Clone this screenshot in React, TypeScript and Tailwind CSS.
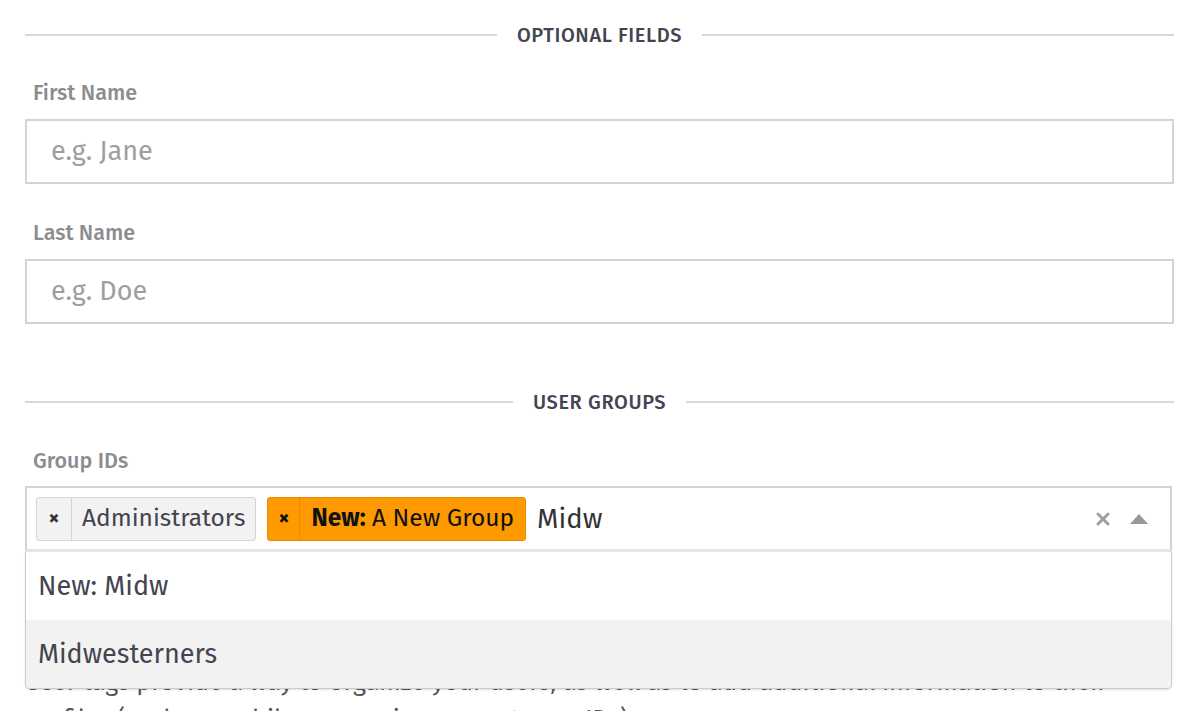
import React from "react";

const font = { fontFamily: '"Fira Sans", "Open Sans", "Noto Sans", sans-serif' };

function Divider({ label }: { label: string }) {
  return (
    <div className="flex items-center h-[24px] gap-[20px]">
      <div className="flex-1 h-[2px] bg-[#d5d9d9]" />
      <div className="text-[20px] leading-[24px] font-medium tracking-[0.6px] text-[#454552]">{label}</div>
      <div className="flex-1 h-[2px] bg-[#d5d9d9]" />
    </div>
  );
}

function Field({ label, placeholder }: { label: string; placeholder: string }) {
  return (
    <div>
      <div className="text-[21.5px] leading-[24px] font-medium text-[#8c8c90] pl-[8px]">{label}</div>
      <div className="mt-[14px] h-[65px] border-2 border-[#d4d4d4] bg-white flex items-center pl-[24px]">
        <span className="text-[27px] text-[#9e9e9e]">{placeholder}</span>
      </div>
    </div>
  );
}

export default function App() {
  return (
    <div className="w-[1200px] h-[711px] overflow-hidden bg-white pl-[25px] pr-[26px] pt-[23px]" style={font}>
      <Divider label="OPTIONAL FIELDS" />
      <div className="mt-[34px]">
        <Field label="First Name" placeholder="e.g. Jane" />
      </div>
      <div className="mt-[37px]">
        <Field label="Last Name" placeholder="e.g. Doe" />
      </div>
      <div className="mt-[66px]">
        <Divider label="USER GROUPS" />
      </div>
      <div className="mt-[35px] text-[21.5px] leading-[24px] font-medium text-[#8c8c90] pl-[8px]">Group IDs</div>
      <div className="relative mt-[13px] mr-[2px]">
        <div className="h-[65px] border-2 border-[#d4d4d4] border-b-[#e4e4e4] bg-white flex items-center pl-[9px] pr-[20px]">
          <div className="flex items-center h-[44px] border border-[#d6d6d6] rounded-[3px] bg-[#f2f2f2]">
            <div className="w-[35px] h-full flex items-center justify-center border-r border-[#d6d6d6] text-[#333] text-[21px] font-bold">×</div>
            <div className="px-[10px] text-[24.5px] text-[#44444f]">Administrators</div>
          </div>
          <div className="ml-[11px] flex items-center h-[44px] border border-[#e68a00] rounded-[3px] bg-[#ff9900]">
            <div className="w-[32px] h-full flex items-center justify-center border-r border-dotted border-[#d97f00] text-[#111] text-[21px] font-bold">×</div>
            <div className="px-[11px] text-[24.5px] text-[#111]">
              <span className="font-bold">New:</span> A New Group
            </div>
          </div>
          <div className="ml-[11px] text-[27.5px] text-[#333]">Midw</div>
          <div className="flex-1" />
          <svg width="14" height="14" viewBox="0 0 14 14" className="mr-[20px]">
            <path d="M2 2 L12 12 M12 2 L2 12" stroke="#a0a0a0" strokeWidth="3" strokeLinecap="round" />
          </svg>
          <svg width="18" height="10" viewBox="0 0 18 10" className="mr-[2px]">
            <polygon points="0,10 9,0 18,10" fill="#999" />
          </svg>
        </div>
        <div className="absolute left-0 right-0 top-[65px] z-10 bg-white border border-[#ccc] border-t-[#e6e6e6] rounded-b-[5px] shadow-[0_1px_2px_rgba(0,0,0,0.12)] overflow-hidden">
          <div className="h-[68px] flex items-center pl-[12px] text-[27px] text-[#44444f]">New: Midw</div>
          <div className="h-[68px] flex items-center pl-[12px] text-[27px] text-[#44444f] bg-[#f2f2f2]">Midwesterners</div>
        </div>
      </div>
      <p className="mt-[112px] text-[25px] leading-[38px] text-[#555] whitespace-nowrap">
        User tags provide a way to organize your users, as well as to add additional information to their
        <br />
        profiles (such as mobile app, region, or customer IDs).
      </p>
    </div>
  );
}
